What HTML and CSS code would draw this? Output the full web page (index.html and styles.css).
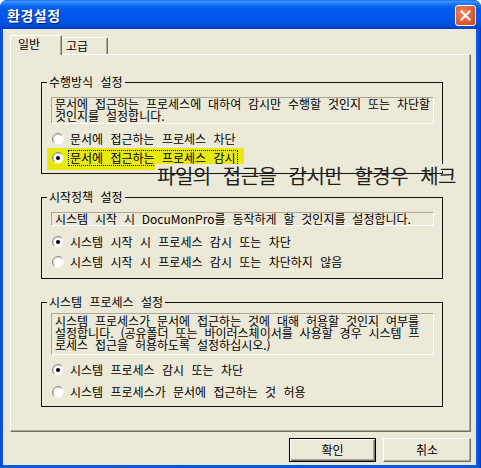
FILE: index.html
```html
<!DOCTYPE html>
<html lang="ko">
<head>
<meta charset="utf-8">
<title>환경설정</title>
<link rel="stylesheet" href="styles.css">
</head>
<body>
<div class="window">
  <div class="titlebar">
    <span class="title">환경설정</span>
    <button class="close" aria-label="닫기">
      <svg width="11" height="11" viewBox="0 0 11 11"><path d="M1.5 1.5 L9.5 9.5 M9.5 1.5 L1.5 9.5" stroke="#fff" stroke-width="2" stroke-linecap="square"/></svg>
    </button>
  </div>
  <div class="client">
    <div class="tabs">
      <div class="tab active">일반</div>
      <div class="tab">고급</div>
    </div>
    <div class="panel">
      <div class="group g1">
        <span class="legend">수행방식 설정</span>
        <div class="desc d1"><div>문서에 접근하는 프로세스에 대하여 감시만 수행할 것인지 또는 차단할</div><div>것인지를 설정합니다.</div></div>
        <div class="radio row18">
          <svg class="rb" width="12" height="12" viewBox="0 0 12 12"><circle cx="6" cy="6" r="5.5" fill="#fff"/><path d="M2.1 9.9 A5.5 5.5 0 0 1 9.9 2.1" stroke="#8a8a84" fill="none"/><path d="M2.8 9.2 A4.5 4.5 0 0 1 9.2 2.8" stroke="#c9c7bc" fill="none"/></svg>
          <span class="label">문서에 접근하는 프로세스 차단</span>
        </div>
        <div class="radio mark">
          <svg class="rb" width="12" height="12" viewBox="0 0 12 12"><circle cx="6" cy="6" r="5.5" fill="#fff"/><path d="M2.1 9.9 A5.5 5.5 0 0 1 9.9 2.1" stroke="#8a8a84" fill="none"/><path d="M2.8 9.2 A4.5 4.5 0 0 1 9.2 2.8" stroke="#c9c7bc" fill="none"/><circle cx="6" cy="6" r="2" fill="#000"/></svg>
          <span class="label focus">문서에 접근하는 프로세스 감시</span>
        </div>
      </div>
      <div class="group g2">
        <span class="legend">시작정책 설정</span>
        <div class="desc d2"><div>시스템 시작 시 <span class="latin">DocuMonPro</span>를 동작하게 할 것인지를 설정합니다.</div></div>
        <div class="radio row20 first">
          <svg class="rb" width="12" height="12" viewBox="0 0 12 12"><circle cx="6" cy="6" r="5.5" fill="#fff"/><path d="M2.1 9.9 A5.5 5.5 0 0 1 9.9 2.1" stroke="#8a8a84" fill="none"/><path d="M2.8 9.2 A4.5 4.5 0 0 1 9.2 2.8" stroke="#c9c7bc" fill="none"/><circle cx="6" cy="6" r="2" fill="#000"/></svg>
          <span class="label">시스템 시작 시 프로세스 감시 또는 차단</span>
        </div>
        <div class="radio row20">
          <svg class="rb" width="12" height="12" viewBox="0 0 12 12"><circle cx="6" cy="6" r="5.5" fill="#fff"/><path d="M2.1 9.9 A5.5 5.5 0 0 1 9.9 2.1" stroke="#8a8a84" fill="none"/><path d="M2.8 9.2 A4.5 4.5 0 0 1 9.2 2.8" stroke="#c9c7bc" fill="none"/></svg>
          <span class="label">시스템 시작 시 프로세스 감시 또는 차단하지 않음</span>
        </div>
      </div>
      <div class="group g3">
        <span class="legend">시스템 프로세스 설정</span>
        <div class="desc d3"><div>시스템 프로세스가 문서에 접근하는 것에 대해 허용할 것인지 여부를</div><div>설정합니다. (공유폴더 또는 바이러스체이서를 사용할 경우 시스템 프</div><div>로세스 접근을 허용하도록 설정하십시오.)</div></div>
        <div class="radio row22 first">
          <svg class="rb" width="12" height="12" viewBox="0 0 12 12"><circle cx="6" cy="6" r="5.5" fill="#fff"/><path d="M2.1 9.9 A5.5 5.5 0 0 1 9.9 2.1" stroke="#8a8a84" fill="none"/><path d="M2.8 9.2 A4.5 4.5 0 0 1 9.2 2.8" stroke="#c9c7bc" fill="none"/><circle cx="6" cy="6" r="2" fill="#000"/></svg>
          <span class="label">시스템 프로세스 감시 또는 차단</span>
        </div>
        <div class="radio row22">
          <svg class="rb" width="12" height="12" viewBox="0 0 12 12"><circle cx="6" cy="6" r="5.5" fill="#fff"/><path d="M2.1 9.9 A5.5 5.5 0 0 1 9.9 2.1" stroke="#8a8a84" fill="none"/><path d="M2.8 9.2 A4.5 4.5 0 0 1 9.2 2.8" stroke="#c9c7bc" fill="none"/></svg>
          <span class="label">시스템 프로세스가 문서에 접근하는 것 허용</span>
        </div>
      </div>
    </div>
    <div class="buttons">
      <button class="btn default">확인</button>
      <button class="btn cancel">취소</button>
    </div>
  </div>
  <div class="note">파일의 접근을 감시만 할경우 체크</div>
</div>
</body>
</html>
```

FILE: styles.css
```css
html, body {
  margin: 0;
  padding: 0;
  background: #ffffff;
}

body {
  font-family: "Noto Sans CJK KR", "Noto Sans", sans-serif;
  font-size: 12px;
  color: #000;
}

.window {
  width: 481px;
  height: 468px;
  box-sizing: border-box;
  background: linear-gradient(to right, #0041c8 0, #0a5ae8 2px, #0055e5 50%, #0a5ae8 calc(100% - 3px), #0036b8 100%);
  border-radius: 7px 7px 0 0;
  display: flex;
  flex-direction: column;
  position: relative;
  overflow: hidden;
}

.titlebar {
  height: 29px;
  flex: none;
  display: flex;
  align-items: center;
  justify-content: space-between;
  padding: 1px 5px 0 7px;
  box-sizing: border-box;
  background: linear-gradient(to bottom, #0a5ce6 0, #3d95ff 1px, #2a85ff 3px, #0a64f2 6px, #0058ee 10px, #0057ec 18px, #0052e2 23px, #004ad6 26px, #003fc4 29px);
}

.title {
  color: #fff;
  font-weight: bold;
  font-size: 14px;
  line-height: 16px;
  letter-spacing: 0.5px;
  text-shadow: 1px 1px 0 #0a1e8a;
}

.close {
  width: 21px;
  height: 21px;
  margin: 0;
  padding: 0;
  border: 1px solid #fff;
  border-radius: 3px;
  background: radial-gradient(circle at 35% 35%, #ef8a65 0, #e2643a 45%, #c8421a 100%);
  display: flex;
  align-items: center;
  justify-content: center;
  box-sizing: border-box;
}

.client {
  flex: 1;
  margin: 0 5px 3px 3px;
  background: #ece9d8;
  padding: 6px 5px 0 7px;
  display: flex;
  flex-direction: column;
}

.tabs {
  display: flex;
  align-items: flex-end;
  height: 19px;
}

.tab {
  box-sizing: border-box;
  background: #ece9d8;
  font-size: 12px;
  line-height: 14px;
  white-space: nowrap;
}

.tab.active {
  width: 52px;
  height: 20px;
  margin-bottom: -1px;
  position: relative;
  z-index: 1;
  border-top: 1px solid #fff;
  border-left: 1px solid #fff;
  border-right: 1px solid #716f64;
  box-shadow: inset -1px 0 0 #aca899;
  border-radius: 2px 2px 0 0;
  padding: 1px 0 0 7px;
}

.tab:not(.active) {
  width: 46px;
  height: 17px;
  border-top: 1px solid #fff;
  border-right: 1px solid #716f64;
  box-shadow: inset -1px 0 0 #aca899;
  border-radius: 0 2px 0 0;
  padding: 1px 0 0 4px;
}

.panel {
  width: 461px;
  height: 378px;
  box-sizing: border-box;
  border-top: 1px solid #fff;
  border-left: 1px solid #fff;
  border-right: 1px solid #716f64;
  border-bottom: 1px solid #716f64;
  box-shadow: inset -1px -1px 0 #aca899;
  display: flex;
  flex-direction: column;
}

.group {
  position: relative;
  box-sizing: border-box;
  width: 402px;
  margin-left: 30px;
  border: 1px solid #111;
  display: flex;
  flex-direction: column;
}

.g1 { margin-top: 27px; height: 92px; }
.g2 { margin-top: 23px; height: 82px; }
.g3 { margin-top: 23px; height: 105px; }

.legend {
  position: absolute;
  top: -8px;
  left: 5px;
  padding: 0 2px;
  background: #ece9d8;
  line-height: 14px;
  word-spacing: 4px;
  white-space: nowrap;
}

.desc {
  box-sizing: border-box;
  width: 383px;
  margin-left: 9px;
  border-top: 1px solid #aca899;
  border-left: 1px solid #aca899;
  border-right: 1px solid #fff;
  border-bottom: 1px solid #fff;
  padding-left: 3px;
  font-size: 12px;
  line-height: 12px;
  word-spacing: 3.5px;
  white-space: nowrap;
}

.desc div {
  height: 12px;
}

.d1 { margin-top: 14px; height: 27px; }
.d2 { margin-top: 14px; height: 14px; }
.d3 { margin-top: 10px; height: 42px; padding-top: 1px; }

.latin {
  word-spacing: 0;
}

.radio {
  display: flex;
  align-items: center;
  margin-left: 10px;
  word-spacing: 4px;
  white-space: nowrap;
}

.rb {
  flex: none;
  margin-right: 6px;
}

.label {
  line-height: 14px;
}

.row18 { height: 18px; margin-top: 6px; }
.row20 { height: 20px; }
.row20.first { margin-top: 6px; }
.row22 { height: 22px; }
.row22.first { margin-top: 4px; }

.mark {
  margin-left: 5px;
  padding-left: 5px;
  width: 197px;
  height: 22px;
  box-sizing: border-box;
  background: #e9e912;
  align-items: flex-start;
  padding-top: 2px;
}

.mark .rb {
  margin-right: 4px;
  margin-top: 2px;
}

.focus {
  border: 1px dotted #000;
  padding: 0 1px;
  line-height: 14px;
}

.buttons {
  display: flex;
  justify-content: flex-end;
  gap: 7px;
  margin-top: 6px;
}

.btn {
  height: 24px;
  margin: 0;
  box-sizing: border-box;
  background: #ece9d8;
  font-family: "Noto Sans CJK KR", "Noto Sans", sans-serif;
  font-size: 12px;
  line-height: 14px;
  color: #000;
  padding: 0;
}

.btn.default {
  width: 87px;
  border: 1px solid #000;
  box-shadow: inset 1px 1px 0 #fff, inset -1px -1px 0 #716f64, inset -2px -2px 0 #aca899;
}

.btn.cancel {
  width: 88px;
  border-top: 1px solid #fff;
  border-left: 1px solid #fff;
  border-right: 1px solid #716f64;
  border-bottom: 1px solid #716f64;
  box-shadow: inset -1px -1px 0 #aca899;
}

.note {
  position: absolute;
  left: 155px;
  top: 164px;
  padding: 0 2px;
  font-size: 20px;
  line-height: 23px;
  letter-spacing: -0.5px;
  word-spacing: 7px;
  color: #1e1e1e;
  white-space: nowrap;
  background: linear-gradient(to bottom, #ece9d8 0, #ece9d8 7px, transparent 7px);
}
```
